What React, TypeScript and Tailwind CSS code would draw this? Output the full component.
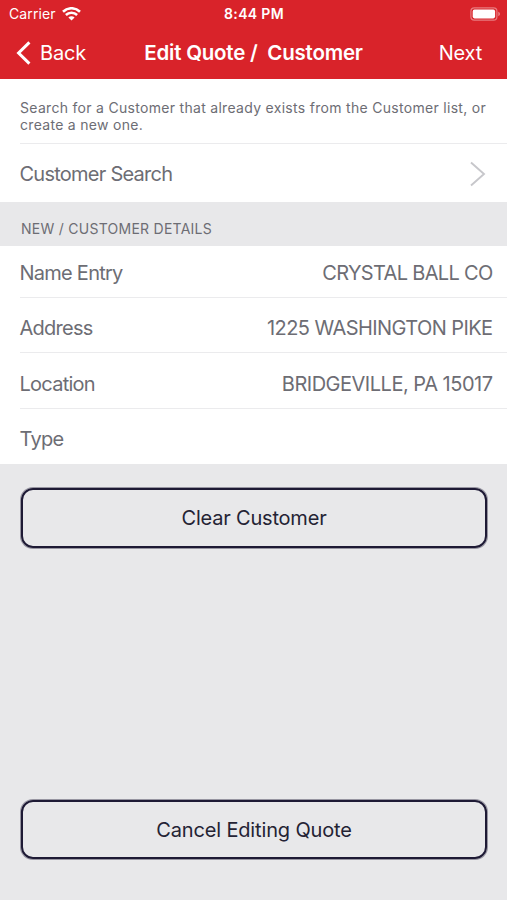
/* ------------------------------------------------------------------ */
/*  Types                                                              */
/* ------------------------------------------------------------------ */

interface DetailRowProps {
  label: string;
  value?: string;
  valueClass?: string;
  rowClass: string;
}

/* ------------------------------------------------------------------ */
/*  Icons                                                              */
/* ------------------------------------------------------------------ */

function WifiIcon() {
  return (
    <svg width="19" height="14" viewBox="0 0 19 14" fill="none" stroke="#fff">
      <path d="M1 4.7a12.2 12.2 0 0 1 17 0" strokeWidth="2.6" />
      <path d="M3.9 8a7.9 7.9 0 0 1 11.2 0" strokeWidth="2.5" />
      <path d="M9.5 13.6 6.4 10.6a4.4 4.4 0 0 1 6.2 0Z" fill="#fff" stroke="none" />
    </svg>
  );
}

function BatteryIcon() {
  return (
    <svg width="31" height="14" viewBox="0 0 31 14" fill="none">
      <rect x="0.9" y="0.8" width="26" height="12.4" rx="3.4" stroke="#fff" strokeOpacity="0.4" strokeWidth="1.2" />
      <rect x="2.7" y="2.6" width="22.4" height="8.8" rx="1.8" fill="#fff" />
      <path d="M28.4 4.8c1.9.7 1.9 3.7 0 4.4Z" fill="#fff" fillOpacity="0.5" />
    </svg>
  );
}

function BackIcon() {
  return (
    <svg width="16" height="24" viewBox="0 0 16 24" fill="none">
      <path d="M13.4 1.4 2.6 12l10.8 10.6" stroke="#fff" strokeWidth="3" />
    </svg>
  );
}

function DisclosureIcon() {
  return (
    <svg width="16" height="26" viewBox="0 0 16 26" fill="none">
      <path d="M1 1.5 14 13 1 24.5" stroke="#c7c7cb" strokeWidth="1.9" />
    </svg>
  );
}

/* ------------------------------------------------------------------ */
/*  Rows                                                               */
/* ------------------------------------------------------------------ */

function DetailRow({ label, value, valueClass, rowClass }: DetailRowProps) {
  return (
    <div className={`ml-5 flex items-center justify-between pr-[14.5px] text-xl ${rowClass}`}>
      <span className="-ml-[0.5px] tracking-[-0.75px]">{label}</span>
      {value && <span className={valueClass}>{value}</span>}
    </div>
  );
}

/* ------------------------------------------------------------------ */
/*  Screen                                                             */
/* ------------------------------------------------------------------ */

export default function App() {
  return (
    <div className="flex h-[900px] w-[507px] flex-col overflow-hidden whitespace-nowrap bg-[#e8e8ea] font-['Inter',sans-serif] text-[#6d6d74]">
      <header className="h-[79px] shrink-0 bg-[#d9232a] text-white">
        {/* Status bar */}
        <div className="grid h-[27px] grid-cols-3 items-center pl-[9px] pr-[6px] text-sm">
          <div className="flex items-center gap-[6px]">
            <span className="tracking-[0.1px]">Carrier</span>
            <WifiIcon />
          </div>
          <span className="pr-[2px] text-center font-semibold tracking-[0.35px]">8:44 PM</span>
          <div className="flex justify-end">
            <BatteryIcon />
          </div>
        </div>

        {/* Navigation bar */}
        <nav className="grid h-[51px] grid-cols-[134px_1fr_134px] items-center text-xl">
          <button className="flex items-center gap-2 pl-4">
            <BackIcon />
            <span className="tracking-[-0.2px]">Back</span>
          </button>
          <h1 className="whitespace-pre pt-[2px] text-center text-[20.5px] font-semibold tracking-[-0.23px]">
            Edit Quote /  Customer
          </h1>
          <button className="pr-[25px] text-right tracking-[-0.2px]">Next</button>
        </nav>
      </header>

      <main className="flex grow flex-col">
        <section className="bg-white">
          <p className="ml-5 h-[65px] border-b border-[#ebebed] pt-[20px] text-sm leading-[17px] tracking-[0.3px]">
            Search for a Customer that already exists from the Customer list, or
            <br />
            create a new one.
          </p>
          <button className="flex h-[58px] w-full items-center justify-between pl-[19.5px] pr-[21px] pt-px text-xl">
            <span className="tracking-[-0.75px]">Customer Search</span>
            <DisclosureIcon />
          </button>
        </section>

        <h2 className="h-[44px] pl-[21px] pt-[17px] text-sm leading-5 tracking-[0.26px]">NEW / CUSTOMER DETAILS</h2>

        <section className="bg-white">
          <DetailRow
            label="Name Entry"
            value="CRYSTAL BALL CO"
            valueClass="tracking-[-0.68px]"
            rowClass="h-[52px] border-b border-[#ebebed] pt-[2px]"
          />
          <DetailRow
            label="Address"
            value="1225 WASHINGTON PIKE"
            valueClass="tracking-[-0.58px]"
            rowClass="h-[55px] border-b border-[#ebebed] pt-[6px]"
          />
          <DetailRow
            label="Location"
            value="BRIDGEVILLE, PA 15017"
            valueClass="tracking-[-0.49px]"
            rowClass="h-[56px] border-b border-[#ebebed] pt-[6px]"
          />
          <DetailRow label="Type" rowClass="h-[55px] pt-[5px]" />
        </section>

        <div className="flex grow flex-col justify-between pb-[41px] pl-[21px] pr-5 pt-6 text-xl text-[#242334]">
          <button className="h-[60px] rounded-xl border-2 border-[#1e1a35] tracking-[-0.2px] ring-1 ring-[#1e1a35]/40">
            Clear Customer
          </button>
          <button className="h-[59px] rounded-xl border-2 border-[#1e1a35] tracking-[-0.15px] ring-1 ring-[#1e1a35]/40">
            Cancel Editing Quote
          </button>
        </div>
      </main>
    </div>
  );
}
